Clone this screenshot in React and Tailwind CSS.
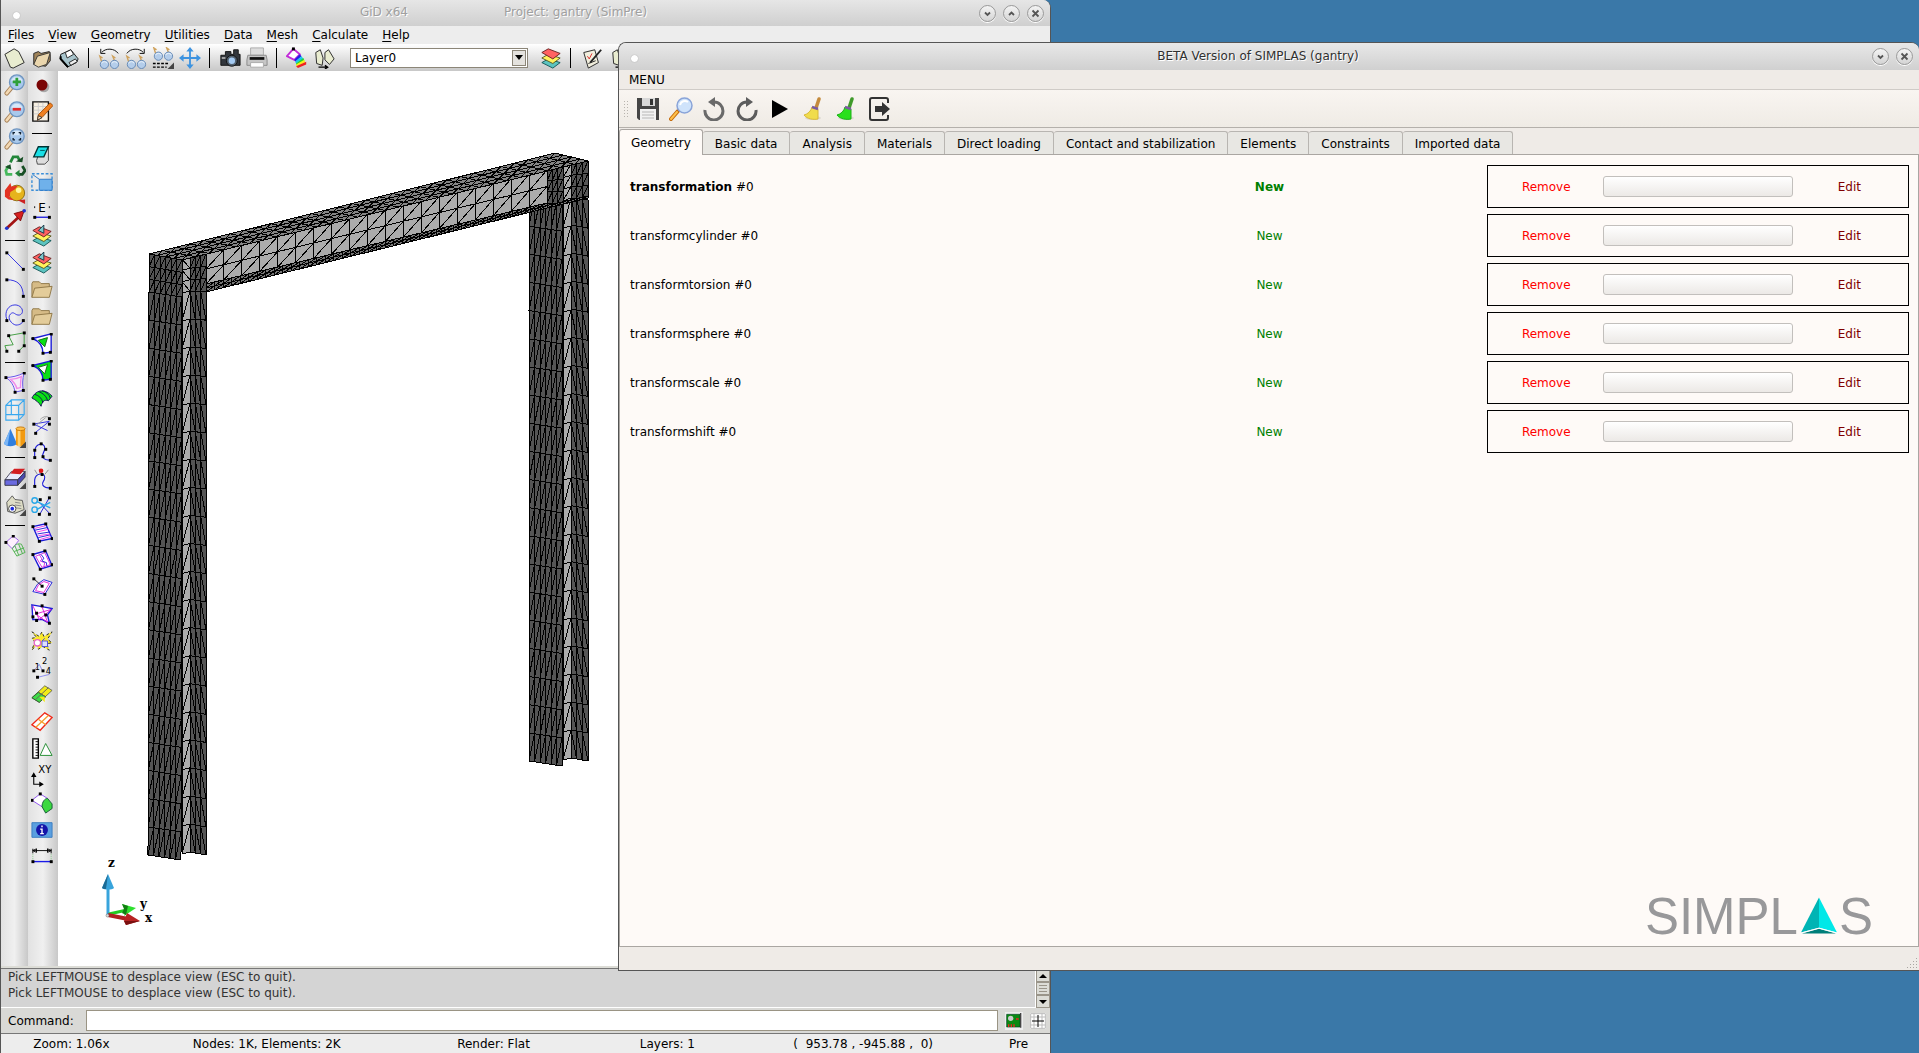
import { useState } from "react";

/* ---------- small icons, all on a 24 x 24 grid ---------- */

const Svg = ({ size = 24, children }) => (
    <svg width={size} height={size} viewBox="0 0 24 24" fill="none" aria-hidden="true">
        {children}
    </svg>
);

const Dots = ({ at }) => at.map(([x, y]) => <rect key={x + "-" + y} x={x - 1.5} y={y - 1.5} width="3.2" height="3.2" fill="#000" />);

const Lens = ({ children }) => (
    <>
        <path d="M8 15 3 21" stroke="#a8835a" strokeWidth="5" strokeLinecap="round" />
        <path d="M7.500 15.500 3 21" stroke="#f3d9b3" strokeWidth="3" strokeLinecap="round" />
        <circle cx="14" cy="9" r="8" fill="#a9c9ec" stroke="#6f95c0" strokeWidth="1.500" />
        <path d="M8 8a6 5 0 0 1 12 0Z" fill="#d6e7f8" />
        {children}
    </>
);

const Stack = ({ children }) => (
    <>
        <path d="m2 17 7-4 13 4-8 6Z" fill="#5cc4c0" stroke="#155" />
        <path d="m2 12 7-4 13 4-8 6Z" fill="#fff35c" stroke="#552" />
        <path d="m2 6 7-4 13 5-8 6Z" fill="#ff6262" stroke="#622" />
        {children}
    </>
);

const Glasses = ({ y = 0 }) => (
    <g transform={`translate(0 ${y})`}>
        <path d="m4 14-2-6 3 2M18 13l-2-5 3 2" stroke="#cfa25c" strokeWidth="1.500" />
        <circle cx="7" cy="17" r="4.500" fill="#b4cdea" stroke="#6287b3" />
        <circle cx="18" cy="17" r="4.500" fill="#b4cdea" stroke="#6287b3" />
        <path d="M4 16a3 2 0 0 1 6 0M15 16a3 2 0 0 1 6 0" stroke="#eef5fc" />
    </g>
);

const Folder = () => (
    <>
        <path d="M1 20V5l1-2h7l2 2h9v4" fill="#d6bb86" stroke="#8d7545" />
        <path d="m1 20 3-10 19-2-3 12Z" fill="#e3cc9a" stroke="#8d7545" />
    </>
);

const Corner = () => <path d="M24 17v7h-7Z" fill="#444" />;

const ICONS = {
    page: (
        <path d="m1 8 10-6 5 3 6 12-12 6-3-1Z" fill="#e9ecd0" stroke="#222" />
    ),
    open: (
        <>
            <path d="M3 19V7l5-2 3 2 9-2 1 3v7l-5 6Z" fill="#a08358" stroke="#222" />
            <path d="m3 19 4-9 14-4-4 13-9 3Z" fill="#ead6ad" stroke="#333" />
        </>
    ),
    floppy: (
        <>
            <path d="m3 8 11-5 8 10-2 4-10 5-8-9Z" fill="#a8c4cc" stroke="#111" />
            <path d="m8 6 6-3 3 5-7 4Z" fill="#fff" stroke="#222" />
            <path d="m12 17 7-4 2 3-7 4Z" fill="#eee" stroke="#222" />
            <path d="M3 10v3l8 9" stroke="#000" strokeWidth="2" />
        </>
    ),
    glassesBack: (
        <>
            <path d="M4 6c4-5 14-5 18 1M3 2v5h5" stroke="#000" />
            <Glasses y={2} />
        </>
    ),
    glassesNext: (
        <>
            <path d="M2 7C6 1 16 1 20 6m1-4v5h-5" stroke="#000" />
            <Glasses y={2} />
        </>
    ),
    glassesList: (
        <>
            <Glasses y={-7} />
            <path d="M1 18h17M1 22h15" stroke="#000" strokeWidth="1.500" strokeDasharray="3 1.500" />
            <Corner />
        </>
    ),
    move: (
        <>
            <path d="M12 3v18M3 12h18" stroke="#3d93e0" strokeWidth="2" />
            <path d="m12 0 4 5H8Zm0 24 4-5H8ZM0 12l5-4v8Zm24 0-5-4v8Z" fill="#3d93e0" />
        </>
    ),
    camera: (
        <>
            <path d="M2 9h5V5h6v3h3V3h5v5h2v12H2Z" fill="#33373d" stroke="#111" />
            <circle cx="14" cy="15" r="6" fill="#52606e" stroke="#111" />
            <circle cx="14" cy="15" r="3.500" fill="#a5cbf3" />
            <path d="M3 11h4v2H3Z" fill="#aaa" />
        </>
    ),
    printer: (
        <>
            <path d="M5 1h14v8H5Z" fill="#ddd" stroke="#aaa" />
            <path d="M2 9h20l1 5v6H1v-6Z" fill="#c6c6c6" stroke="#888" />
            <path d="M4 11h16v3H4Z" fill="#111" />
            <path d="M5 17h14v5H5Z" fill="#fff" stroke="#aaa" />
        </>
    ),
    rainbow: (
        <>
            <path d="m1 10 7-8 7 6-6 6Z" fill="#fff" stroke="#c22bd8" strokeWidth="2" />
            <path d="m15 8-6 6 1 2 7-6Z" fill="#2222e8" />
            <path d="m17 10-7 6 1 2 8-5Z" fill="#18c9e8" />
            <path d="m19 12-8 6v2l9-5Z" fill="#27d427" />
            <path d="m20 14-9 5v2l10-4Z" fill="#f5ee20" />
            <path d="m22 16-11 5 2 2 9-4Z" fill="#f02020" />
            <Dots at={[[8, 2]]} />
        </>
    ),
    pages: (
        <>
            <path d="m3 6 5-3 3 9-1 8-6-2Z" fill="#e9ecd0" stroke="#222" />
            <path d="m13 6 4-3 6 10-5 6-5-5Z" fill="#e9ecd0" stroke="#222" />
            <path d="M6 22h10m-3-2 3 2-3 2" stroke="#000" strokeWidth="1.500" />
        </>
    ),
    layers: <Stack />,
    layersPick: (
        <Stack>
            <path d="m8 6 6-6v9Z" fill="#7fc8cc" stroke="#134" />
        </Stack>
    ),
    note: (
        <>
            <path d="m3 6 12-3 4 14-11 6Z" fill="#f1eedd" stroke="#222" />
            <path d="m7 10 2 3 3-6" stroke="#d22" />
            <path d="M22 3 10 17" stroke="#222" strokeWidth="2" />
            <path d="m8 18 8-3" stroke="#222" />
        </>
    ),
    zoomIn: (
        <Lens>
            <path d="M14 4v9M9.500 8.500h9" stroke="#2fa03a" strokeWidth="3" />
        </Lens>
    ),
    zoomOut: (
        <Lens>
            <path d="M9.500 9h9" stroke="#e02a2a" strokeWidth="3" />
        </Lens>
    ),
    zoomFit: (
        <Lens>
            <path d="M10 7V5h2m4 0h2v2m0 4v2h-2m-4 0h-2v-2" stroke="#123" strokeWidth="1.500" />
        </Lens>
    ),
    recycle: (
        <>
            <path d="m7 8 3-6h5l2 4" stroke="#23873a" strokeWidth="3" />
            <path d="m13 7 7 1 1-6Z" fill="#184f25" />
            <path d="m20 12 3 5-3 4h-5" stroke="#184f25" strokeWidth="3" />
            <path d="m12 20 5-4v8Z" fill="#23873a" />
            <path d="M9 21H3l-1-4 3-5" stroke="#45b85c" strokeWidth="3" />
            <path d="m1 13 6-3 1 6Z" fill="#184f25" />
        </>
    ),
    ball: (
        <>
            <circle cx="14" cy="12" r="8.500" fill="#e6b41c" stroke="#8a6a10" />
            <circle cx="16" cy="9" r="3" fill="#fff6a0" />
            <path d="m1 9 6-8 1 4 7-1-3 4-5 3-1 5 5 4-6-1-4-3Z" fill="#e33222" />
            <path d="m15 20 8-1v5Z" fill="#c22" />
        </>
    ),
    vector: (
        <>
            <path d="M3 21 17 8" stroke="#a31515" strokeWidth="3" />
            <path d="m11 5 11-3-4 11Z" fill="#d81f1f" stroke="#7a0d0d" />
            <circle cx="3" cy="21" r="2" fill="#23c" />
            <circle cx="22" cy="2" r="2" fill="#23c" />
        </>
    ),
    line: (
        <>
            <path d="m3 3 18 18" stroke="#2a2ae0" />
            <Dots at={[[3, 3], [21, 21]]} />
        </>
    ),
    arc: (
        <>
            <path d="M3 3c12 0 18 6 18 18" stroke="#2a2ae0" />
            <Dots at={[[3, 3], [21, 21]]} />
        </>
    ),
    nurbs: (
        <>
            <path d="M3 17C0 8 5 1 12 1c8 0 11 9 5 11-5 1-6-5-10-1s1 11 6 12c4 0 8-2 8-6" stroke="#2a2ae0" />
            <Dots at={[[3, 18], [21, 18]]} />
        </>
    ),
    polyline: (
        <>
            <path d="M3 22 1 16l9-1L5 5l17-3v14l-6 6" stroke="#3a9a3a" />
            <Dots at={[[3, 22], [5, 5], [22, 2], [22, 16], [16, 22]]} />
        </>
    ),
    surface: (
        <>
            <path d="M2 6c6 0 14-2 20-5-2 7-2 13-1 19l-9 2C11 15 8 10 2 6Z" fill="#f6ecf8" stroke="#5a4ae8" />
            <path d="M7 8c4 0 8-1 12-3-1 4-1 9-1 12l-4 1C13 14 11 11 7 8Z" stroke="#f08ae8" strokeWidth="1.500" />
            <Dots at={[[2, 6], [22, 1], [21, 20], [12, 22]]} />
        </>
    ),
    volume: (
        <path d="M2 7h14v16H2Zm0 0 6-6h14l-6 6m6-6v16l-6 6M8 1v16H2m6 0h14" stroke="#38a8f0" strokeWidth="1.200" />
    ),
    solids: (
        <>
            <path d="M7 3 0 19c2 4 12 4 14 0Z" fill="#2f7fe0" />
            <path d="M7 3 4 21c-2 0-4-1-4-2Z" fill="#7ab5f5" />
            <path d="M13 3v17c1 3 9 3 10 0V3Z" fill="#f29a12" />
            <path d="M15 4v18h3V4Z" fill="#ffd070" />
            <ellipse cx="18" cy="3" rx="5" ry="2" fill="#ffc04a" stroke="#c87808" />
            <Corner />
        </>
    ),
    eraser: (
        <>
            <path d="m1 14 7-9h15l-8 9Z" fill="#e8eafc" stroke="#445" />
            <path d="m11 2-4 5 11 1 5-6Z" fill="#d21e22" />
            <path d="M1 14h14v6H1Z" fill="#6a6ae0" stroke="#334" />
            <path d="m15 14 8-9v6l-8 9Z" fill="#4a4ab0" stroke="#334" />
            <Corner />
        </>
    ),
    roll: (
        <>
            <path d="m3 9 6-7 3 4 8 1 2 10-10 4-8-2Z" fill="#deddc6" stroke="#555" />
            <path d="m12 9 6 1m-6 2 7 1m-6 2 6 1" stroke="#888" />
            <circle cx="9" cy="16" r="4" fill="#fff" stroke="#444" />
            <circle cx="9" cy="16" r="2" fill="#1a2ae0" />
            <Corner />
        </>
    ),
    patchMesh: (
        <>
            <path d="M2 8 10 1l6 5-7 9Z" fill="#fdf0fd" stroke="#9a5ae8" />
            <path d="M9 15c3-5 6-6 10-5l4 9-9 4ZM12 12l4 10M16 10l4 10M11 18l11-4" stroke="#4ab04a" />
            <Dots at={[[2, 8], [10, 1]]} />
        </>
    ),
    record: (
        <>
            <circle cx="14" cy="14" r="6" fill="#a8a8a8" />
            <circle cx="12" cy="12" r="6" fill="#7a0505" />
        </>
    ),
    notes: (
        <>
            <path d="M2 1h17v21H2Z" fill="#f6efe2" stroke="#111" strokeWidth="1.500" />
            <path d="M3 6h15M3 10h15M3 14h8M8 2v14M13 2v8" stroke="#ccc" />
            <path d="m21 2 3 3-12 13-5 3 1-6Z" fill="#f08020" stroke="#a04c08" />
            <path d="m7 21 1-5 4 2Z" fill="#ffe0b8" stroke="#333" />
        </>
    ),
    book: (
        <>
            <path d="m6 18 5-15h8v15l-4 4H7Z" fill="#ddd" stroke="#444" />
            <path d="M8 3h11l-5 11H3Z" fill="#19dfe6" stroke="#033" strokeWidth="1.500" />
            <path d="M10 7h5" stroke="#055" />
        </>
    ),
    rectZoom: (
        <>
            <path d="M1 3h22v18H1Z" stroke="#3d8fd8" strokeWidth="1.500" strokeDasharray="3 2" />
            <path d="M9 9h14v12H9Z" fill="#6fb1ea" stroke="#2a78c8" />
            <path d="m2 4 7 5" stroke="#2a78c8" />
        </>
    ),
    dimE: (
        <>
            <path d="M4 21h16" stroke="#22d" strokeWidth="1.500" />
            <Dots at={[[4, 21], [20, 21]]} />
            <text x="8" y="15" fontSize="13" fontFamily="DejaVu Sans" fill="#000">E</text>
            <path d="M4 9v2m16-2v2" stroke="#000" />
        </>
    ),
    folder: <Folder />,
    tri: (
        <>
            <path d="M2 6 22 1v20l-9 1C13 14 9 9 2 6Z" fill="#fff" stroke="#1a1ad8" strokeWidth="1.500" />
            <path d="m8 8 10-3-3 10Z" fill="#0ae015" stroke="#161" />
            <Dots at={[[2, 6], [22, 1], [21, 21], [13, 22]]} />
        </>
    ),
    triFill: (
        <>
            <path d="M2 6 22 1v20l-9 1C13 14 9 9 2 6Z" fill="#0ae015" stroke="#1a1ad8" strokeWidth="1.500" />
            <path d="m8 8 10-3-3 10Z" fill="#fff" stroke="#161" />
            <Dots at={[[2, 6], [22, 1], [21, 21], [13, 22]]} />
        </>
    ),
    greenPatch: (
        <>
            <path d="M1 12C6 2 16 2 23 10l-4 5c-4-2-7 1-8 6-2-4-6-7-10-9Z" fill="#0ae015" stroke="#115" />
            <path d="M4 8c4 1 8 4 9 9M8 5c4 1 8 4 10 9M12 4c4 1 8 4 9 8" stroke="#115" />
        </>
    ),
    lineEdit: (
        <>
            <path d="M3 11 20 8 5 20M3 11l15 7" stroke="#2a2ae0" />
            <path d="M10 6c4-4 8-4 11-1M6 12l10-8" stroke="#999" />
            <Dots at={[[3, 11], [20, 11], [5, 21], [20, 5]]} />
        </>
    ),
    hook: (
        <>
            <path d="M4 18V11C5 2 15 1 15 8c0 5-4 6-2 10 2 3 5 3 9 3" stroke="#1a1ad8" strokeWidth="1.200" />
            <Dots at={[[4, 18], [4, 10], [11, 3], [16, 9], [13, 17], [21, 21]]} />
        </>
    ),
    hookRed: (
        <>
            <path d="M4 20v-7C5 5 15 5 15 10c0 5-4 5-2 9 2 3 5 3 9 3" stroke="#1a1ad8" strokeWidth="1.200" />
            <path d="m4 2 3 5m2-6 1 5m9-4-4 5" stroke="#888" />
            <circle cx="11" cy="3" r="2.500" fill="#e01818" />
            <Dots at={[[4, 20], [12, 7], [21, 22]]} />
        </>
    ),
    cut: (
        <>
            <path d="M9 22 20 3M9 8l12 13" stroke="#1a1ad8" />
            <path d="m6 7 15 7M6 16l15-8" stroke="#28a8e8" strokeWidth="1.500" />
            <circle cx="4" cy="6" r="3" stroke="#28a8e8" strokeWidth="1.500" />
            <circle cx="4" cy="16" r="3" stroke="#28a8e8" strokeWidth="1.500" />
            <Dots at={[[20, 3], [9, 21], [20, 21], [10, 5]]} />
        </>
    ),
    hatch: (
        <>
            <path d="m2 5 14-3 7 16-14 3Z" fill="#fff" stroke="#1a1ad8" strokeWidth="1.500" />
            <path d="m4 9 14-3M7 13l13-2M8 17l13-3" stroke="#1a1ad8" />
            <path d="m4 7 12-3M6 11l13-3M8 15l13-2M10 19l11-3" stroke="#f03ae8" />
            <Dots at={[[2, 5], [16, 2], [23, 18], [9, 21]]} />
        </>
    ),
    hatchCut: (
        <>
            <path d="m2 6 14-4 7 16-13 4Z" fill="#fff" stroke="#1a1ad8" strokeWidth="1.500" />
            <path d="m5 8 10-4 6 13-9 3ZM9 6l3 5-2 2 5 2-1 4" stroke="#d02ae0" />
            <path d="m11 6 3 4-2 3 5 2v3" stroke="#1a1ad8" />
            <Dots at={[[2, 6], [15, 2], [23, 17], [10, 22]]} />
        </>
    ),
    spin: (
        <>
            <path d="M7 9 14 4l9 3-8 13-13-3Z" fill="#fff" stroke="#1a1ad8" />
            <path d="m8 10 6-4 6 2-6 10-9-2Z" stroke="#e01ad8" />
            <path d="m3 3 9 8" stroke="#222" />
            <Dots at={[[3, 3], [12, 11], [15, 20]]} />
        </>
    ),
    web: (
        <>
            <path d="m1 2 11 2 11 2-5 7 2 9-8-4H2Z" fill="#fff" stroke="#1a1ad8" strokeWidth="1.500" />
            <path d="m2 3 7 15L22 7 5 12l13 9-6-17" stroke="#e01ad8" />
            <Dots at={[[12, 3], [2, 15], [6, 19], [20, 22], [16, 13], [6, 11]]} />
        </>
    ),
    burst: (
        <>
            <path d="m1 2 8 5 3-5 2 5 9-5-5 8 5 4-6 1 3 7-7-4-5 3-2-5-5 6 3-9-3-4 5-1Z" fill="#fbe92c" stroke="#222" strokeDasharray="3 3" />
            <circle cx="7" cy="14" r="3.500" fill="#fff" stroke="#e868c8" strokeWidth="1.500" />
            <path d="M12 12h6v6h-6Zm0 0 3-3" fill="#dfe2ff" stroke="#4a4ae0" />
        </>
    ),
    numbers: (
        <>
            <path d="m3 15 6-7 4 8m-5 6 12-3" stroke="#8a8af0" />
            <text x="4" y="14" fontSize="9" fontFamily="DejaVu Sans" fill="#000">1</text>
            <text x="12" y="8" fontSize="9" fontFamily="DejaVu Sans" fill="#000">2</text>
            <text x="16" y="18" fontSize="9" fontFamily="DejaVu Sans" fill="#000">4</text>
            <Dots at={[[3, 15], [13, 15], [7, 22]]} />
        </>
    ),
    yellowGrid: (
        <>
            <path d="M1 15 15 2l8 5-14 13Z" fill="#f3ec16" stroke="#665" />
            <path d="m1 15 7-6 8 5-7 6Z" fill="#3fdc48" stroke="#353" />
            <path d="m9 14 6 6V14Z" fill="#f3ec16" />
            <path d="m5 17 14-13M8 9l8 5" stroke="#665" />
        </>
    ),
    redGrid: (
        <>
            <path d="M1 15 15 2l8 5-13 14Z" fill="#fff" stroke="#f02a1a" strokeWidth="1.500" />
            <path d="M5 18 19 5M8 9l8 6" stroke="#f5a030" strokeWidth="1.500" />
        </>
    ),
    ruler: (
        <>
            <path d="M2 1h6v21H2Z" fill="#fff" stroke="#000" strokeWidth="1.500" />
            <path d="M5 4h3M5 7h3M5 10h3M5 13h3M5 16h3M5 19h3" stroke="#000" />
            <path d="m16 6 7 13H10Z" fill="#fff" stroke="#1c8a2c" />
        </>
    ),
    xy: (
        <>
            <text x="8" y="9" fontSize="11" fontFamily="DejaVu Sans" fill="#000">XY</text>
            <path d="M3 12v9h9" stroke="#000" strokeWidth="1.200" />
            <path d="m3 8 3 5H0Zm11 13-5-3v6Z" fill="#000" />
        </>
    ),
    patchGreen: (
        <>
            <path d="M1 9 10 2l8 5-6 9Z" fill="#fff" stroke="#8a4af0" />
            <path d="M12 16c0-5 3-9 6-9l5 6v5l-7 5Z" fill="#3bd840" stroke="#153" />
            <Dots at={[[1, 9], [10, 2]]} />
        </>
    ),
    info: (
        <>
            <path d="M1 4h22v16H1Z" fill="#5a9fe0" stroke="#3a7cc0" />
            <circle cx="12" cy="12" r="6.500" fill="#1414a8" />
            <path d="M12 7v2m-2 2h2v5m-2 0h4" stroke="#fff" strokeWidth="1.500" />
        </>
    ),
    dims: (
        <>
            <path d="M2 5h20M2 3v5m20-5v5M2 5l4-2v4Zm20 0-4-2v4Z" stroke="#000" />
            <path d="M2 17h20" stroke="#1a1ae8" strokeWidth="1.500" />
            <path d="M2 9v7M22 9v7" stroke="#8c8" strokeDasharray="1 1" />
            <Dots at={[[2, 17], [22, 17]]} />
        </>
    ),
    save: (
        <>
            <path d="M1 1h22v22H3l-2-2Z" fill="#454545" />
            <path d="M6 1h13v8H6Z" fill="#d8d8d8" />
            <path d="M14 2h3v6h-3Z" fill="#333" />
            <path d="M4 12h16v11H4Z" fill="#f2f2f2" />
            <path d="M6 15h12M6 18h12M6 21h12" stroke="#b8b8b8" />
        </>
    ),
    find: (
        <>
            <path d="m9 14-7 8" stroke="#c46a08" strokeWidth="4" strokeLinecap="round" />
            <path d="m8 15-6 7" stroke="#ffc04a" strokeWidth="2" strokeLinecap="round" />
            <circle cx="15.500" cy="8.500" r="7.500" fill="#cfe3fb" stroke="#8aa4d8" strokeWidth="1.500" />
            <path d="M11 8c1-4 5-5 8-3" stroke="#fff" strokeWidth="2" />
        </>
    ),
    undo: (
        <>
            <path d="M3 13a9 9 0 1 0 9-8" stroke="#6a6a6a" strokeWidth="3" />
            <path d="m13 0-7 5 7 5Z" fill="#6a6a6a" />
        </>
    ),
    redo: (
        <>
            <path d="M21 13a9 9 0 1 1-9-8" stroke="#5c5c5c" strokeWidth="3" />
            <path d="m11 0 7 5-7 5Z" fill="#5c5c5c" />
        </>
    ),
    play: <path d="m4 3 16 9-16 9Z" fill="#000" />,
    broom: (
        <>
            <ellipse cx="12" cy="21" rx="8" ry="2" fill="#dcd8d2" />
            <path d="m18 2-3 9" stroke="#c48a3c" strokeWidth="3.500" strokeLinecap="round" />
            <path d="m11 10 6 2v10c-5 1-11 0-14-4 4-1 7-4 8-8Z" fill="#f0dc4c" stroke="#d8b838" />
            <path d="m11 10 6 2" stroke="#7a5aa0" strokeWidth="2.500" />
        </>
    ),
    broomGreen: (
        <>
            <ellipse cx="12" cy="21" rx="8" ry="2" fill="#dcd8d2" />
            <path d="m18 2-3 9" stroke="#3f9a2a" strokeWidth="3.500" strokeLinecap="round" />
            <path d="m11 10 6 2v10c-5 1-11 0-14-4 4-1 7-4 8-8Z" fill="#2ae01c" stroke="#1ab014" />
            <path d="m11 10 6 2" stroke="#7a5aa0" strokeWidth="2.500" />
        </>
    ),
    exit: (
        <>
            <path d="M21 6V3a2 2 0 0 0-2-2H5a2 2 0 0 0-2 2v18a2 2 0 0 0 2 2h14a2 2 0 0 0 2-2v-3" stroke="#333" strokeWidth="2" />
            <path d="M8 9h7V5l8 7-8 7v-4H8Z" fill="#333" />
        </>
    ),
    chip: (
        <>
            <path d="M1 2h20v19H1Z" fill="#0a8a12" stroke="#042" />
            <circle cx="7" cy="8" r="4" fill="#ccc" />
            <path d="M4 21v-4m4 4v-4m4 4v-4M15 9h4" stroke="#e22" strokeWidth="2" />
            <path d="M22 0v22" stroke="#444" strokeWidth="2" />
        </>
    ),
    grid: (
        <>
            <path d="M0 0h24v24H0Z" fill="#fff" />
            <path d="M1 1h22v22H1ZM6 1v22M18 1v22M1 6h22M1 18h22" stroke="#bbb" strokeWidth="1.500" />
            <path d="M12 3v18M3 12h18" stroke="#000" strokeWidth="1.500" />
        </>
    ),
};

const TOP_TOOLS = ["page", "open", "floppy", "|", "glassesBack", "glassesNext", "glassesList", "move", "|", "camera", "printer", "|", "rainbow", "pages"];
const LEFT_TOOLS = ["zoomIn", "zoomOut", "zoomFit", "recycle", "ball", "vector", "|", "line", "arc", "nurbs", "polyline", "|", "surface", "volume", "solids", "|", "eraser", "roll", "|", "patchMesh"];
const RIGHT_TOOLS = [
    "record", "notes", "|", "book", "rectZoom", "dimE", "layersPick", "layersPick", "folder", "folder", "tri", "triFill", "greenPatch", "lineEdit",
    "hook", "hookRed", "cut", "hatch", "hatchCut", "spin", "web", "burst", "numbers", "yellowGrid", "redGrid", "ruler", "xy", "patchGreen", "info", "dims",
];
const MENUS = ["Files", "View", "Geometry", "Utilities", "Data", "Mesh", "Calculate", "Help"];

/* ---------- gantry mesh ---------- */

const mix = (p, q, t) => [p[0] + (q[0] - p[0]) * t, p[1] + (q[1] - p[1]) * t];

// corners: top left, top right, bottom right, bottom left
function MeshFace({ corners, cols, rows, fill, lean = "/" }) {
    const [a, b, c, d] = corners;
    const at = (i, j) => mix(mix(a, b, i / cols), mix(d, c, i / cols), j / rows);
    let path = "";
    const seg = (p, q) => {
        path += `M${p[0].toFixed(1)} ${p[1].toFixed(1)}L${q[0].toFixed(1)} ${q[1].toFixed(1)}`;
    };
    for (let i = 0; i <= cols; i++) seg(at(i, 0), at(i, rows));
    for (let j = 0; j <= rows; j++) seg(at(0, j), at(cols, j));
    for (let i = 0; i < cols; i++) {
        for (let j = 0; j < rows; j++) {
            if (lean === "/") seg(at(i, j + 1), at(i + 1, j));
            else seg(at(i, j), at(i + 1, j + 1));
        }
    }
    return (
        <>
            <polygon points={corners.join(" ")} fill={fill} />
            <path d={path} stroke="#000" strokeWidth="1" />
        </>
    );
}

const DARK = "#555555";
const LIGHT = "#ababab";

const FACES = [
    // right column
    { corners: [[529, 198], [562, 203], [562, 766], [529, 761]], cols: 6, rows: 20, fill: DARK },
    { corners: [[563, 200], [571, 198], [571, 758], [563, 760]], cols: 1, rows: 20, fill: LIGHT },
    { corners: [[571, 197], [588, 200], [588, 761], [571, 758]], cols: 3, rows: 20, fill: DARK, lean: "\\" },
    // beam
    { corners: [[206, 254], [547, 170], [547, 203], [206, 284]], cols: 19, rows: 2, fill: LIGHT },
    { corners: [[547, 170], [563, 167], [563, 203], [547, 203]], cols: 3, rows: 3, fill: DARK },
    { corners: [[563, 166], [571, 164], [571, 198], [563, 201]], cols: 1, rows: 3, fill: LIGHT },
    { corners: [[571, 164], [588, 161], [588, 198], [571, 198]], cols: 3, rows: 3, fill: DARK },
    { corners: [[182, 290], [588, 196], [588, 198], [206, 292]], cols: 48, rows: 1, fill: "#777777" },
    { corners: [[206, 284], [547, 203], [547, 208], [206, 292]], cols: 40, rows: 2, fill: "#777777" },
    // left column
    { corners: [[149, 254], [182, 260], [182, 297], [149, 292]], cols: 6, rows: 3, fill: DARK },
    { corners: [[149, 292], [182, 297], [181, 860], [148, 855]], cols: 6, rows: 20, fill: DARK },
    { corners: [[182, 259], [190, 257], [190, 291], [182, 293]], cols: 1, rows: 3, fill: LIGHT, lean: "\\" },
    { corners: [[182, 293], [190, 291], [190, 852], [182, 854]], cols: 1, rows: 20, fill: LIGHT },
    { corners: [[190, 257], [206, 254], [206, 291], [190, 291]], cols: 3, rows: 3, fill: DARK },
    { corners: [[190, 291], [206, 292], [206, 855], [190, 852]], cols: 3, rows: 20, fill: DARK, lean: "\\" },
    // top flange
    { corners: [[149, 254], [555, 153], [588, 161], [182, 260]], cols: 30, rows: 4, fill: "#858585" },
];

function Gantry() {
    return (
        <svg className="shrink-0" width="560" height="895" viewBox="58 71 560 895" role="img" aria-label="Gantry mesh">
            <g shapeRendering="crispEdges">
                {FACES.map((face, i) => (
                    <MeshFace key={i} {...face} />
                ))}
            </g>
            {/* axes */}
            <path d="M108 915V885" stroke="#38a4dc" strokeWidth="3" />
            <path d="m108 874 6 14c-2 2-10 2-12 0Z" fill="#38a4dc" />
            <path d="m108 874-6 14c1 1 3 1 4 1Z" fill="#1c6a94" />
            <path d="m109 914 18-4" stroke="#22cc22" strokeWidth="3" />
            <path d="m122 904 14 4-12 8 2-6Z" fill="#2ee02e" />
            <path d="m122 904 6 2-2 9-4-2 2-4Z" fill="#118011" />
            <path d="m108 915 20 4" stroke="#b02020" strokeWidth="4" />
            <path d="m127 913 13 8-14 4-2-4Z" fill="#b82222" />
            <path d="m124 921 16 0-14 4Z" fill="#7a1010" />
            <circle cx="107.500" cy="915.500" r="1.500" fill="#ddd" stroke="#666" strokeWidth="0.500" />
            <g fontFamily="DejaVu Serif" fontWeight="700" fontSize="12" fill="#000">
                <text x="108" y="867">z</text>
                <text x="140" y="908">y</text>
                <text x="145" y="922">x</text>
            </g>
        </svg>
    );
}

/* ---------- GiD window ---------- */

function RoundButton({ label, d }) {
    return (
        <button aria-label={label} className="flex items-center justify-center rounded-full border border-[#999] bg-linear-to-b from-[#f4f4f4] to-[#d4d4d4] size-[17px] shadow-[0_1px_0_#fff]">
            <svg width="9" height="9" viewBox="0 0 9 9" fill="none" stroke="#555" strokeWidth="1.800">
                <path d={d} />
            </svg>
        </button>
    );
}

const DOWN = "m2 3.500 2.500 2.500L7 3.500";
const UP = "m2 6 2.500-2.500L7 6";
const CLOSE = "m1.500 1.500 6 6m0-6-6 6";

function SideBar({ tools, label, className, sep }) {
    return (
        <div role="toolbar" aria-label={label} className={"flex flex-col items-center shrink-0 bg-linear-to-r from-[#e2e2e2] via-[#f0f0f0] to-[#c8c8c8] " + className}>
            {tools.map((name, i) =>
                name === "|" ? (
                    <div key={i} className={"flex items-center shrink-0 " + sep}>
                        <div className="w-5 h-px bg-black"></div>
                    </div>
                ) : (
                    <button key={i} aria-label={name} className="flex items-center justify-center shrink-0 size-[27px]">
                        <Svg size={22}>{ICONS[name]}</Svg>
                    </button>
                )
            )}
        </div>
    );
}

function GidWindow() {
    return (
        <section className="absolute inset-y-0 left-0 right-[868px] flex flex-col border-x border-[#555] rounded-tr-lg overflow-hidden bg-[#ededed]">
            <header className="flex items-center shrink-0 h-[26px] pl-2 pr-[6px] bg-linear-to-b from-[#e6e6e6] to-[#cfcfcf] text-[#a0a0a0]">
                <span className="mt-1 ml-1 rounded-full size-[7px] bg-white shadow-[0_0_1px_#888]"></span>
                <h1 className="flex justify-center flex-1 gap-24 pb-[2px] pl-2 whitespace-pre [text-shadow:1px_1px_0_#fff]">
                    <span>GiD x64</span>
                    <span>Project: gantry (SimPre)</span>
                </h1>
                <div className="flex gap-[7px]">
                    <RoundButton label="Minimize" d={DOWN} />
                    <RoundButton label="Maximize" d={UP} />
                    <RoundButton label="Close" d={CLOSE} />
                </div>
            </header>

            <nav className="flex items-center shrink-0 h-[18px] gap-[14px] px-[7px]">
                {MENUS.map((menu) => (
                    <button key={menu}>
                        <span className="underline underline-offset-2">{menu[0]}</span>
                        {menu.slice(1)}
                    </button>
                ))}
            </nav>

            <div role="toolbar" aria-label="Standard" className="flex items-center shrink-0 h-[27px] bg-linear-to-b from-white to-[#c8c8c8]">
                {TOP_TOOLS.map((name, i) =>
                    name === "|" ? (
                        <div key={i} className="flex justify-center w-[13px]">
                            <div className="w-px h-5 bg-black"></div>
                        </div>
                    ) : (
                        <button key={i} aria-label={name} className="flex justify-center w-[27px]">
                            <Svg size={22}>{ICONS[name]}</Svg>
                        </button>
                    )
                )}
                <div className="relative ml-[13px] w-[178px]">
                    <select aria-label="Layer" className="block w-full h-5 pl-1 bg-white border appearance-none border-[#8c8678]">
                        <option>Layer0</option>
                    </select>
                    <span className="absolute flex items-center justify-center w-[14px] h-4 border pointer-events-none top-[2px] right-[2px] border-[#8c8678] bg-[#e4e2de]">
                        <svg width="8" height="5" viewBox="0 0 8 5">
                            <path d="M0 0h8L4 5Z" fill="#000" />
                        </svg>
                    </span>
                </div>
                <button aria-label="Layers" className="flex justify-center ml-[9px] w-[27px]">
                    <Svg size={22}>{ICONS.layers}</Svg>
                </button>
                <div className="flex justify-center w-[13px]">
                    <div className="w-px h-5 bg-black"></div>
                </div>
                <button aria-label="Problem data" className="flex justify-center w-[30px]">
                    <Svg size={22}>{ICONS.note}</Svg>
                </button>
                <button aria-label="Pages" className="flex justify-center w-[27px]">
                    <Svg size={22}>{ICONS.pages}</Svg>
                </button>
            </div>

            <main className="flex flex-1 min-h-0 overflow-hidden bg-white border-b-2 border-[#dcdcd6]">
                <SideBar tools={LEFT_TOOLS} label="View and geometry" className="w-[27px]" sep="h-[14px]" />
                <SideBar tools={RIGHT_TOOLS} label="Macros" className="w-[30px] pr-[2px]" sep="h-4" />
                <Gantry />
            </main>

            <div className="flex shrink-0 h-10 border-t border-[#777]">
                <div role="log" className="flex-1 pl-[7px] leading-4 border-b border-r bg-[#d4d4d4] border-b-white border-r-white text-[#333]">
                    <p>Pick LEFTMOUSE to desplace view (ESC to quit).</p>
                    <p>Pick LEFTMOUSE to desplace view (ESC to quit).</p>
                </div>
                <div className="flex flex-col w-[14px] bg-[#dcdcd6]">
                    <button aria-label="Scroll up" className="flex items-center justify-center flex-1 border border-[#9a958a]">
                        <svg width="8" height="4" viewBox="0 0 8 4"><path d="M0 4h8L4 0Z" /></svg>
                    </button>
                    <div className="flex flex-col items-center justify-center flex-1 border gap-[2px] border-[#9a958a]">
                        <i className="w-2 h-px bg-[#9a958a]"></i>
                        <i className="w-2 h-px bg-[#9a958a]"></i>
                        <i className="w-2 h-px bg-[#9a958a]"></i>
                    </div>
                    <button aria-label="Scroll down" className="flex items-center justify-center flex-1 border border-[#9a958a]">
                        <svg width="8" height="4" viewBox="0 0 8 4"><path d="M0 0h8L4 4Z" /></svg>
                    </button>
                </div>
            </div>

            <div className="flex items-center shrink-0 h-[26px] bg-[#d9d9d6] border-b border-[#777] pl-[7px] pr-[3px]">
                <label htmlFor="command" className="w-[78px]">Command:</label>
                <input id="command" className="flex-1 h-[21px] px-1 bg-white border border-[#9a9484] outline-none" />
                <button aria-label="Processes" className="flex items-center justify-center ml-[7px] size-[18px] bg-[#ededed]">
                    <Svg size={16}>{ICONS.chip}</Svg>
                </button>
                <button aria-label="Grid" className="flex items-center justify-center ml-[6px] size-[18px]">
                    <Svg size={16}>{ICONS.grid}</Svg>
                </button>
            </div>

            <footer className="grid items-center text-center whitespace-pre shrink-0 h-[19px] grid-cols-[141fr_250fr_204fr_144fr_248fr_63fr]">
                <span>Zoom: 1.06x</span>
                <span>Nodes: 1K, Elements: 2K</span>
                <span>Render: Flat</span>
                <span>Layers: 1</span>
                <span>{"(  953.78 , -945.88 ,  0)"}</span>
                <span>Pre</span>
            </footer>
        </section>
    );
}

/* ---------- SIMPLAS window ---------- */

const TABS = ["Geometry", "Basic data", "Analysis", "Materials", "Direct loading", "Contact and stabilization", "Elements", "Constraints", "Imported data"];
const ROWS = ["transformation", "transformcylinder", "transformtorsion", "transformsphere", "transformscale", "transformshift"];
const ACTIONS = ["save", "find", "undo", "redo", "play", "broom", "broomGreen", "exit"];

function Row({ name, active }) {
    return (
        <li className="grid items-center grid-cols-3 gap-[6px]">
            <span>
                <span className={active ? "font-bold" : ""}>{name}</span> #0
            </span>
            <button className={active ? "text-[#008000] font-bold" : "text-[#008000]"}>New</button>
            <div className="grid items-center h-[43px] px-2 gap-[6px] border border-black grid-cols-[1fr_190px_1fr]">
                <button className="text-[#ff0000]">Remove</button>
                <button aria-label={"Select " + name} className="h-[21px] border rounded-[3px] border-[#c2bfbc] bg-linear-to-b from-white to-[#ece9e6]"></button>
                <button className="text-[#800000]">Edit</button>
            </div>
        </li>
    );
}

function Logo() {
    return (
        <div className="flex items-baseline leading-none text-[#98989a] text-[51px] font-['Liberation_Sans',sans-serif]">
            <span>SIMPL</span>
            <svg className="ml-[3px] mr-[2px]" width="36" height="37" viewBox="0 0 37 37" aria-label="A">
                <path d="M18.500 0 0 36l18.500-5Z" fill="#00b4b4" />
                <path d="M18.500 0 37 36l-18.500-5Z" fill="#00e8e8" />
                <path d="m1 37 17.500-5L36 37Z" fill="#007f7a" />
                <path d="m0 36.500 18.500-5 18.500 5" fill="none" stroke="#fff" />
            </svg>
            <span>S</span>
        </div>
    );
}

function SimplasWindow() {
    const [tab, setTab] = useState("Geometry");
    return (
        <section className="absolute top-[42px] bottom-[82px] left-[618px] right-0 flex flex-col overflow-hidden border border-r-0 rounded-t-lg border-[#555] bg-[#efebe7]">
            <header className="flex items-center shrink-0 h-[27px] pl-3 pr-[6px] bg-linear-to-b from-[#e8e8e8] to-[#d0d0d0] text-[#303030]">
                <span className="mt-1 rounded-full size-[7px] bg-white shadow-[0_0_1px_#888]"></span>
                <h1 className="flex-1 text-center pb-[2px] pr-[14px] pl-[20px] [text-shadow:1px_1px_0_#fff]">BETA Version of SIMPLAS (gantry)</h1>
                <div className="flex gap-[7px]">
                    <RoundButton label="Minimize" d={DOWN} />
                    <RoundButton label="Close" d={CLOSE} />
                </div>
            </header>

            <nav className="flex items-center shrink-0 h-5 px-[10px] border-b border-[#cfcbc7]">
                <button>MENU</button>
            </nav>

            <div role="toolbar" aria-label="Actions" className="flex items-center shrink-0 h-[38px] pl-1 border-b border-[#b4b0ab] bg-linear-to-b from-[#f9f5f1] to-[#efebe5]">
                <span className="w-[5px] h-[18px] mr-[3px] bg-[radial-gradient(#b8b4ae_1px,transparent_1px)] bg-size-[3px_3px]"></span>
                {ACTIONS.map((name) => (
                    <button key={name} aria-label={name} className="flex justify-center w-[33px]">
                        <Svg>{ICONS[name]}</Svg>
                    </button>
                ))}
            </div>

            <div role="tablist" className="flex items-end shrink-0 h-[27px] border-b border-[#aaa6a2]">
                {TABS.map((name) => (
                    <button
                        key={name}
                        role="tab"
                        aria-selected={tab === name}
                        onClick={() => setTab(name)}
                        className={
                            tab === name
                                ? "h-[26px] -mb-px px-[11px] pt-px border border-b-0 rounded-t-[3px] border-[#aaa6a2] bg-[#fefaf7]"
                                : "h-[23px] px-3 pt-px border-t border-r rounded-t-[3px] border-[#b8b5b1] bg-[#e8e7e3]"
                        }
                    >
                        {name}
                    </button>
                ))}
            </div>

            <div role="tabpanel" className="flex flex-col justify-between flex-1 min-h-0 pt-[10px] pb-1 pl-[10px] pr-[9px] border-b border-r border-l bg-[#fefaf7] border-[#aaa6a2]">
                <ul className="flex flex-col gap-[6px]">
                    {ROWS.map((name, i) => (
                        <Row key={name} name={name} active={i === 0} />
                    ))}
                </ul>
                <div className="self-end pr-9">
                    <Logo />
                </div>
            </div>

            <footer className="flex items-end justify-end shrink-0 h-[23px] p-px">
                <svg width="12" height="12" viewBox="0 0 12 12" fill="#aaa6a2" aria-hidden="true">
                    <path d="M10 1h1v1h-1zM7 4h1v1H7zM10 4h1v1h-1zM4 7h1v1H4zM7 7h1v1H7zM10 7h1v1h-1zM1 10h1v1H1zM4 10h1v1H4zM7 10h1v1H7zM10 10h1v1h-1z" />
                </svg>
            </footer>
        </section>
    );
}

export default function App() {
    return (
        <div className="relative h-screen overflow-hidden text-xs text-black bg-[#3a78a8] font-['DejaVu_Sans',sans-serif]">
            <GidWindow />
            <SimplasWindow />
        </div>
    );
}
